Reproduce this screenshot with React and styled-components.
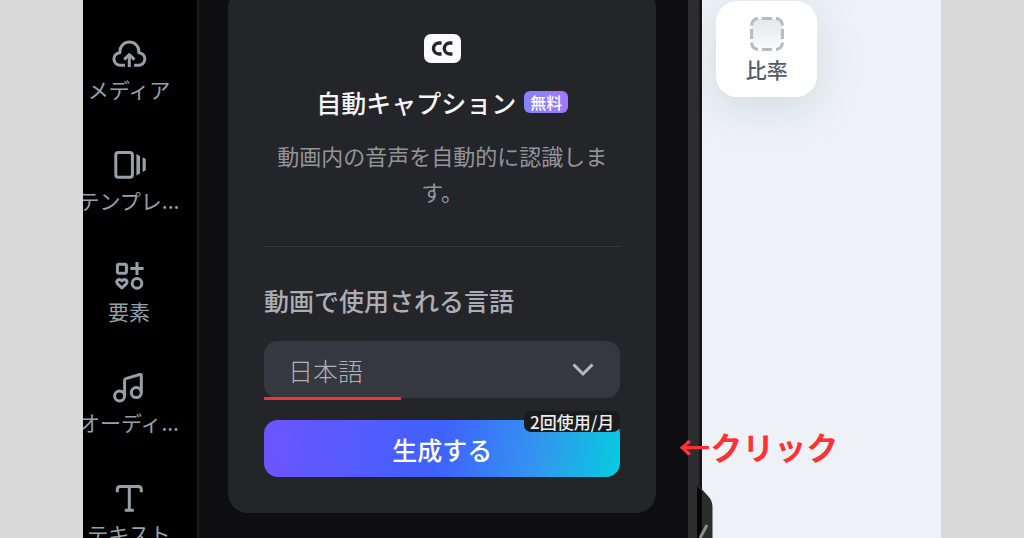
import React from 'react';
import styled, { createGlobalStyle } from 'styled-components';

const GlobalStyle = createGlobalStyle`
  * {
    box-sizing: border-box;
  }
  body {
    margin: 0;
    background: #d9d9d9;
    font-family: 'Noto Sans CJK JP', 'Liberation Sans', sans-serif;
  }
  button, select {
    font-family: inherit;
  }
`;

const MediaIcon = () => (
  <Icon viewBox="0 0 36 36">
    <path d="M14 29.3H9.5a6.3 6.3 0 0 1-.6-12.6v-1.2a9.5 9.5 0 0 1 19 0v1.2a6.3 6.3 0 0 1-.6 12.6H23" />
    <path d="M18.3 31V18.6M13.2 23.6l5.1-5.1 5.1 5.1" />
  </Icon>
);

const TemplateIcon = () => (
  <Icon viewBox="0 0 36 36">
    <rect x="4.8" y="5.5" width="16.6" height="24.7" rx="2.5" />
    <path d="M25.4 7l3.6 2v17.5l-3.6 2zM31.6 10.3l3.2 1.8v11.2l-3.2 1.8z" fill="currentColor" stroke="none" />
  </Icon>
);

const ElementsIcon = () => (
  <Icon viewBox="0 0 36 36">
    <rect x="6.4" y="6.2" width="9" height="9" rx="1.8" />
    <path d="M26 4v13M19.4 10.6h13.2" />
    <path d="M10.9 30l-4.4-4.2c-1.8-2.4.9-6.2 4.4-3 3.5-3.2 6.2.6 4.4 3z" />
    <circle cx="26" cy="25.4" r="4.8" />
  </Icon>
);

const AudioIcon = () => (
  <Icon viewBox="0 0 36 36">
    <circle cx="8.6" cy="27" r="5" />
    <circle cx="25.3" cy="23.6" r="5" />
    <path d="M13.6 27V11.2q0-1.2 1.2-1.6l14-4.1q1.5-.4 1.5 1.1v17" />
  </Icon>
);

const TextIcon = () => (
  <Icon viewBox="0 0 36 36">
    <path d="M6.3 12.3V9.5q0-3 3-3h18q3 0 3 3v2.8M18.3 6.5v23.8M13.8 30.3h9" />
  </Icon>
);

const CaptionIcon = () => (
  <CaptionSvg viewBox="0 0 37 29" aria-label="CC" role="img">
    <rect width="37" height="29" rx="7" fill="#fafaff" />
    <g fill="none" stroke="#242529" strokeWidth="3.4">
      <path d="M17.6 9H15a5.5 5.5 0 0 0 0 11h2.6" />
      <path d="M28.4 9h-2.6a5.5 5.5 0 0 0 0 11h2.6" />
    </g>
  </CaptionSvg>
);

const RatioIcon = () => (
  <RatioSvg viewBox="0 0 34 34">
    <defs>
      <linearGradient id="ratioFill" x1="0" y1="0" x2="0" y2="1">
        <stop offset="0" stopColor="#e3e7eb" />
        <stop offset="1" stopColor="#fafbfc" />
      </linearGradient>
    </defs>
    <rect x="2" y="2" width="30" height="30" rx="6" fill="url(#ratioFill)" />
    <path
      d="M1.6 8.5V8A6.4 6.4 0 0 1 8 1.6M12 1.6h10M26 1.6A6.4 6.4 0 0 1 32.4 8v.5M32.4 12v10M32.4 25.5v.5a6.4 6.4 0 0 1-6.4 6.4M22 32.4H12M8 32.4A6.4 6.4 0 0 1 1.6 26v-.5M1.6 22V12"
      fill="none"
      stroke="#b5bac3"
      strokeWidth="3"
    />
  </RatioSvg>
);

const tools = [
  { label: 'メディア', icon: MediaIcon },
  { label: 'テンプレ...', icon: TemplateIcon },
  { label: '要素', icon: ElementsIcon },
  { label: 'オーディ...', icon: AudioIcon },
  { label: 'テキスト', icon: TextIcon },
];

const App = () => (
  <>
    <GlobalStyle />
    <Page>
      <Sidebar>
        <ToolList>
          {tools.map(({ label, icon: ToolIcon }) => (
            <Tool key={label} type="button">
              <ToolIcon />
              <span>{label}</span>
            </Tool>
          ))}
        </ToolList>
      </Sidebar>
      <Panel>
        <Card>
          <CaptionIcon />
          <Title>
            自動キャプション
            <FreeTag>無料</FreeTag>
          </Title>
          <Description>動画内の音声を自動的に認識します。</Description>
          <Divider />
          <Label htmlFor="language">動画で使用される言語</Label>
          <SelectField>
            <Select id="language" defaultValue="ja">
              <option value="ja">日本語</option>
            </Select>
            <Chevron viewBox="0 0 22 14">
              <path d="M1.5 1.5L11 11l9.5-9.5" />
            </Chevron>
            <Underline />
          </SelectField>
          <Generate type="button">
            生成する
            <UsageTag>2回使用/月</UsageTag>
          </Generate>
        </Card>
        <Callout>←クリック</Callout>
      </Panel>
      <PanelEdge>
        <Handle viewBox="0 0 16 54">
          <path d="M0 0l11.5 12.5Q15.500 17 15.500 23V54H0z" fill="#2b2d2c" />
          <path d="M0 2l5 5.500V54H0z" fill="#060606" />
          <path d="M10 41L3 54" stroke="#8b8c8b" strokeWidth="3" />
        </Handle>
      </PanelEdge>
      <Canvas>
        <RatioButton type="button">
          <RatioIcon />
          <span>比率</span>
        </RatioButton>
      </Canvas>
    </Page>
  </>
);

const Page = styled.div`
  display: flex;
  height: 100vh;
  padding: 0 8.1vw;
  overflow: hidden;
`;

const Sidebar = styled.nav`
  flex: 0 0 116px;
  border-right: 2px solid #1b1b1d;
  background: #000;
  overflow: hidden;
`;

const ToolList = styled.div`
  display: flex;
  flex-direction: column;
  align-items: center;
  gap: 44px;
  margin-left: -22px;
  padding-top: 36px;
`;

const Tool = styled.button`
  display: flex;
  flex-direction: column;
  align-items: center;
  gap: 3px;
  padding: 0;
  border: 0;
  background: none;
  color: #96a0a8;
  font-size: 21px;
  line-height: 28px;
  white-space: nowrap;
`;

const Icon = styled.svg`
  width: 36px;
  height: 36px;
  fill: none;
  stroke: currentColor;
  stroke-width: 3;
  stroke-linejoin: round;
`;

const Panel = styled.main`
  position: relative;
  flex: 488 1 0;
  padding: 0 32px 0 29px;
  background: #0e0e10;
`;

const PanelEdge = styled.div`
  position: relative;
  flex: 0 0 14px;
  border-right: 3px solid #17171b;
  background: #2d2d2f;
`;

const Handle = styled.svg`
  position: absolute;
  left: 9px;
  bottom: 0;
  width: 16px;
  height: 54px;
`;

const Card = styled.section`
  display: flex;
  flex-direction: column;
  margin-top: -12px;
  padding: 46px 36px 36px;
  border-radius: 20px;
  background: #242529;
`;

const CaptionSvg = styled.svg`
  align-self: center;
  width: 37px;
  height: 29px;
`;

const Title = styled.h2`
  display: flex;
  align-items: center;
  justify-content: center;
  gap: 8px;
  margin: 21px 0 0;
  color: #f5f5fa;
  font-size: 25px;
  font-weight: 500;
  line-height: 36px;
  white-space: nowrap;
`;

const FreeTag = styled.span`
  padding: 0 6px;
  border-radius: 6px;
  background: linear-gradient(90deg, #8583ff, #a377ff);
  color: #fff;
  font-size: 16px;
  line-height: 22px;
`;

const Description = styled.p`
  margin: 17px 0 0;
  color: #94959b;
  font-size: 22px;
  line-height: 36px;
  text-align: center;
`;

const Divider = styled.hr`
  width: 100%;
  margin: 37px 0 35px;
  border: 0;
  border-top: 1px solid #38393e;
`;

const Label = styled.label`
  color: #adaeb5;
  font-size: 25px;
  font-weight: 500;
  line-height: 36px;
`;

const SelectField = styled.div`
  position: relative;
  margin-top: 23px;
`;

const Select = styled.select`
  display: block;
  width: 100%;
  height: 57px;
  padding: 0 24px;
  border: 0;
  border-radius: 14px;
  appearance: none;
  background: #363840;
  color: #b0b1b8;
  font-size: 25px;
  font-weight: 300;
`;

const Chevron = styled.svg`
  position: absolute;
  top: 22px;
  right: 26px;
  width: 22px;
  height: 14px;
  fill: none;
  stroke: #b8b9c0;
  stroke-width: 3;
  pointer-events: none;
`;

const Underline = styled.span`
  position: absolute;
  left: 0;
  top: 56px;
  width: 137px;
  height: 3px;
  background: #f93033;
`;

const Generate = styled.button`
  position: relative;
  height: 57px;
  margin-top: 22px;
  padding: 0;
  border: 0;
  border-radius: 14px;
  background: linear-gradient(100deg, #6b55ff 2%, #3f61ff 49%, #3494ef 76%, #09c8e0 98%);
  color: #fff;
  font-size: 25px;
  font-weight: 500;
`;

const UsageTag = styled.span`
  position: absolute;
  top: -9px;
  right: 0;
  padding: 0 6px;
  border-radius: 7px;
  background: #1b1b1c;
  color: #ececec;
  font-size: 17px;
  line-height: 21px;
`;

const Callout = styled.strong`
  position: absolute;
  top: 422px;
  left: calc(100% - 10px);
  z-index: 1;
  color: #ff3134;
  font-size: 32px;
  font-weight: 700;
  line-height: 48px;
  white-space: nowrap;
`;

const Canvas = styled.section`
  flex: 240 1 0;
  padding: 1px 14px;
  background: #eef2f6;
  overflow: hidden;
`;

const RatioButton = styled.button`
  display: flex;
  flex-direction: column;
  align-items: center;
  gap: 4px;
  width: 101px;
  height: 96px;
  padding: 16px 0 0;
  border: 0;
  border-radius: 21px;
  background: #fff;
  box-shadow: 0 10px 40px rgba(130, 150, 155, 0.26);
  color: #555a6c;
  font-size: 21px;
  font-weight: 500;
  line-height: 28px;
`;

const RatioSvg = styled.svg`
  width: 34px;
  height: 34px;
`;

export default App;
